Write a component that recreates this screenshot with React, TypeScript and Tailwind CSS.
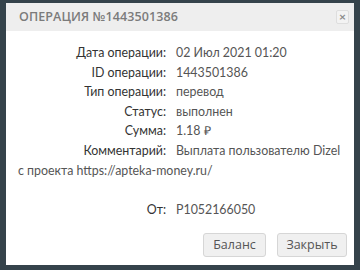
import React from "react";

const rows: [string, string][] = [
  ["Дата операции:", "02 Июл 2021 01:20"],
  ["ID операции:", "1443501386"],
  ["Тип операции:", "перевод"],
  ["Статус:", "выполнен"],
  ["Сумма:", "1.18 ₽"],
];

export default function App() {
  return (
    <div className="w-[360px] h-[270px] bg-[#35434b] pt-[3px] px-[6px] overflow-hidden" style={{ fontFamily: 'Lato, "Open Sans", sans-serif' }}>
      <div className="bg-white h-[262px] flex flex-col">
        <div className="h-[28px] bg-[#eeeeee] flex items-center justify-between pl-[13px] pr-[5px]">
          <div className="text-[12.5px] font-semibold tracking-[0.1px] text-[#7b7b7b]" style={{ fontFamily: '"Open Sans", sans-serif' }}>ОПЕРАЦИЯ №1443501386</div>
          <div className="w-[13px] h-[14px] rounded-[2px] border border-[#dedede] bg-[#f3f3f3] flex items-center justify-center text-[#8a8a8a] text-[12px] font-bold leading-none">×</div>
        </div>
        <div className="pl-[12px] pr-[4px] pt-[12px] text-[12.4px] leading-[19.6px]">
          {rows.map(([l, v]) => (
            <div key={l}>
              <span className="inline-block w-[148px] text-right text-[#333] mr-[10px]">{l}</span>
              <span className="text-[#555]">{v}</span>
            </div>
          ))}
          <div>
            <span className="inline-block w-[148px] text-right text-[#333] mr-[10px]">Комментарий:</span>
            <span className="text-[#555]">Выплата пользователю Dizel<br />с проекта https://apteka-money.ru/</span>
          </div>
          <div className="h-[19.6px]" />
          <div>
            <span className="inline-block w-[148px] text-right text-[#333] mr-[10px]">От:</span>
            <span className="text-[#555]">P1052166050</span>
          </div>
        </div>
        <div className="mt-auto flex justify-end gap-[11px] pr-[7px] pb-[8px]" style={{ fontFamily: '"Open Sans", sans-serif' }}>
          <button className="w-[63px] h-[24px] rounded-[3px] border border-[#d6d6d6] bg-[#f0f0f0] text-[12.5px] text-[#555]">Баланс</button>
          <button className="w-[70px] h-[24px] rounded-[3px] border border-[#d6d6d6] bg-[#f0f0f0] text-[12.5px] text-[#555]">Закрыть</button>
        </div>
      </div>
    </div>
  );
}
